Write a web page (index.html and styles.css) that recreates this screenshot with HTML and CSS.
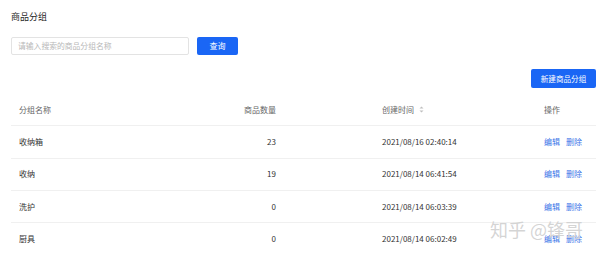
FILE: index.html
```html
<!DOCTYPE html>
<html lang="zh-CN">
<head>
<meta charset="utf-8">
<link rel="stylesheet" href="styles.css">
</head>
<body>
<div class="page">
  <div class="title">商品分组</div>
  <div class="search">
    <div class="input">请输入搜索的商品分组名称</div>
    <button class="btn btn-query">查询</button>
  </div>
  <div class="toolbar">
    <button class="btn btn-new">新建商品分组</button>
  </div>
  <div class="table">
    <div class="row head">
      <div class="cell">分组名称</div>
      <div class="cell num">商品数量</div>
      <div class="cell time">创建时间
        <svg class="sort" width="5" height="7" viewBox="0 0 5 7"><path d="M0.5 2.6 L2.5 0.6 L4.5 2.6 Z" fill="#bfbfbf"/><path d="M0.5 4.4 L2.5 6.4 L4.5 4.4 Z" fill="#bfbfbf"/></svg>
      </div>
      <div class="cell">操作</div>
    </div>
    <div class="row">
      <div class="cell">收纳箱</div>
      <div class="cell num">23</div>
      <div class="cell time">2021/08/16 02:40:14</div>
      <div class="cell ops"><a>编辑</a><a>删除</a></div>
    </div>
    <div class="row">
      <div class="cell">收纳</div>
      <div class="cell num">19</div>
      <div class="cell time">2021/08/14 06:41:54</div>
      <div class="cell ops"><a>编辑</a><a>删除</a></div>
    </div>
    <div class="row">
      <div class="cell">洗护</div>
      <div class="cell num">0</div>
      <div class="cell time">2021/08/14 06:03:39</div>
      <div class="cell ops"><a>编辑</a><a>删除</a></div>
    </div>
    <div class="row">
      <div class="cell">厨具</div>
      <div class="cell num">0</div>
      <div class="cell time">2021/08/14 06:02:49</div>
      <div class="cell ops"><a>编辑</a><a>删除</a></div>
    </div>
  </div>
  <div class="watermark">知乎 @锋哥</div>
</div>
</body>
</html>
```

FILE: styles.css
```css
* { box-sizing: border-box; }
html, body { margin: 0; padding: 0; background: #fff; }
body {
  font-family: "Noto Sans CJK SC", "Noto Sans", sans-serif;
  font-size: 8px;
  color: #333;
  width: 600px;
  height: 254px;
  overflow: hidden;
}
.page {
  position: relative;
  padding: 11px 4px 0 11px;
}
.title {
  font-size: 9px;
  line-height: 12px;
  color: #262626;
}
.search {
  display: flex;
  align-items: center;
  gap: 8px;
  margin-top: 14px;
}
.input {
  width: 178px;
  height: 18px;
  border: 1px solid #e3e3e3;
  border-radius: 2px;
  padding: 0 6px;
  line-height: 16px;
  font-size: 7.8px;
  color: #b8b8b8;
}
.btn {
  border: none;
  background: #1a66f5;
  color: #fff;
  font-family: inherit;
  font-size: 8px;
  border-radius: 2px;
  height: 18px;
  padding: 0;
  line-height: 18px;
}
.btn-query { width: 41px; }
.toolbar {
  display: flex;
  justify-content: flex-end;
  margin-top: 14px;
}
.btn-new {
  width: 65px;
  height: 19px;
  font-size: 7.6px;
}
.table {
  margin-top: 6px;
}
.row {
  display: grid;
  grid-template-columns: 179px 94px 252px 1fr;
  height: 32.3px;
  align-items: center;
  border-bottom: 1px solid #f0f0f0;
}
.cell {
  padding: 0 8px;
  line-height: 12px;
  color: #333;
  white-space: nowrap;
}
.head .cell { color: #666; }
.num { text-align: right; }
.time { padding-left: 98px; display: flex; align-items: center; gap: 5px; }
.sort { display: block; }
.ops { display: flex; gap: 6px; }
.ops a { color: #3b74e8; }
.watermark {
  position: absolute;
  left: 490px;
  top: 218px;
  font-size: 18px;
  line-height: 22px;
  color: rgba(170, 170, 170, 0.5);
  text-shadow: 0 0 1px #fff;
  pointer-events: none;
  white-space: nowrap;
}
```
